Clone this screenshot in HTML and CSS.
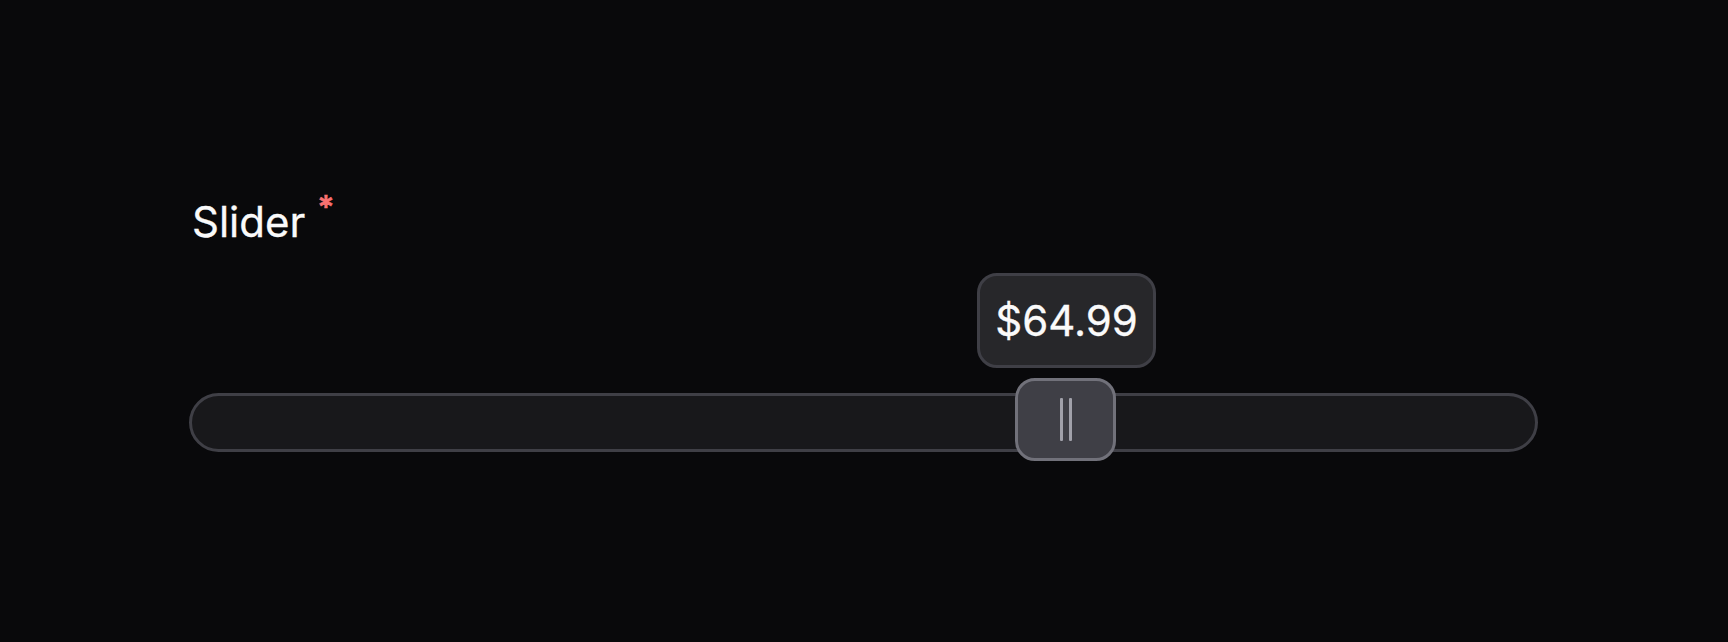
FILE: index.html
```html
<!DOCTYPE html>
<html lang="en">
<head>
<meta charset="utf-8">
<title>Slider</title>
<link rel="stylesheet" href="styles.css">
</head>
<body>
<main class="page">
  <div class="field">
    <label class="label">Slider <span class="required">*</span></label>
    <div class="slider">
      <div class="track"></div>
      <div class="tooltip">$64.99</div>
      <div class="thumb"><span class="grip"></span><span class="grip"></span></div>
    </div>
  </div>
</main>
</body>
</html>
```
FILE: styles.css
```css
html, body {
  margin: 0;
  padding: 0;
  background: #09090b;
  height: 100%;
}
.page {
  font-family: Inter, "Noto Sans", sans-serif;
  color: #fafafa;
  padding: 197px 190px 0 189px;
}
.field {
  display: flex;
  flex-direction: column;
  width: 1349px;
}
.label {
  font-size: 42px;
  line-height: 50px;
  font-weight: 400;
  padding-left: 3px;
  display: flex;
  align-items: flex-start;
  gap: 12px;
  -webkit-text-stroke: 0.3px #fafafa;
}
.required {
  color: #f87171;
  font-size: 32px;
  line-height: 30px;
  font-weight: 600;
  margin-top: -4px;
  -webkit-text-stroke: 0.5px #f87171;
}
.slider {
  position: relative;
  margin-top: 146px;
}
.track {
  height: 53px;
  border: 3px solid #3f3f46;
  border-radius: 30px;
  background: #18181b;
}
.tooltip {
  position: absolute;
  left: 788px;
  top: -120px;
  width: 173px;
  height: 89px;
  box-sizing: content-box;
  border: 3px solid #3f3f46;
  border-radius: 20px;
  background: #27272a;
  display: flex;
  align-items: center;
  justify-content: center;
  font-size: 42px;
  color: #fafafa;
  -webkit-text-stroke: 0.3px #fafafa;
}
.thumb {
  position: absolute;
  left: 826px;
  top: -15px;
  width: 95px;
  height: 77px;
  border: 3px solid #71717a;
  border-radius: 20px;
  background: #3f3f46;
  display: flex;
  align-items: center;
  justify-content: center;
  gap: 6px;
}
.grip {
  width: 3px;
  height: 43px;
  background: #a1a1aa;
  border-radius: 1px;
}
```
